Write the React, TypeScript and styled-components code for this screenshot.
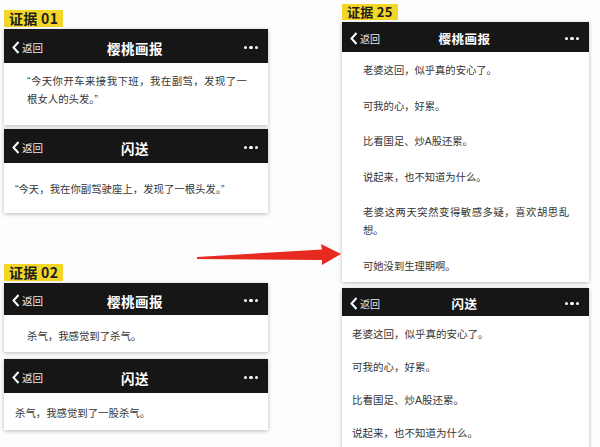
import React from "react";
import styled, { createGlobalStyle } from "styled-components";

const Global = createGlobalStyle`
  html, body { margin: 0; padding: 0; background: #fdfdfd; }
  body { font-family: "Noto Sans CJK SC", "Noto Sans", sans-serif; }
`;

const Page = styled.div`
  position: relative;
  width: 600px;
  height: 447px;
  overflow: hidden;
  background: #fdfdfd;
  display: grid;
  grid-template-columns: 264px 247px;
  column-gap: 74px;
  padding-left: 4px;
  box-sizing: border-box;
`;

const Column = styled.div<{ $top: number }>`
  display: flex;
  flex-direction: column;
  align-items: flex-start;
  padding-top: ${(p) => p.$top}px;
`;

const Label = styled.div<{ $size: number; $mt?: number }>`
  background: #f3d628;
  color: #1d1d1d;
  font-weight: 700;
  font-size: ${(p) => p.$size}px;
  line-height: ${(p) => p.$size + 3}px;
  padding: 0 5px;
  margin-top: ${(p) => p.$mt ?? 0}px;
  margin-bottom: 2px;
  letter-spacing: 0.3px;
`;

const Card = styled.div<{ $mt?: number }>`
  align-self: stretch;
  margin-top: ${(p) => p.$mt ?? 0}px;
  background: #fff;
  box-shadow: 0 1px 4px rgba(0, 0, 0, 0.28);
`;

const Header = styled.div<{ $h: number; $title: number }>`
  height: ${(p) => p.$h}px;
  background: #171617;
  display: grid;
  grid-template-columns: 1fr auto 1fr;
  align-items: center;
  padding: 3px 10px 0 8px;
  box-sizing: border-box;
  color: #fff;
  font-size: ${(p) => p.$title}px;
`;

const Back = styled.div<{ $size: number }>`
  display: flex;
  align-items: center;
  gap: 2px;
  color: #e8e8e8;
  font-size: ${(p) => p.$size}px;
`;

const Title = styled.div`
  font-weight: 700;
  letter-spacing: 0.5px;
`;

const Dots = styled.div`
  justify-self: end;
  display: flex;
  gap: 2px;
`;

const Dot = styled.span`
  width: 3.5px;
  height: 3.5px;
  border-radius: 50%;
  background: #fff;
`;

const Body = styled.div<{ $pad: string; $size: number; $gap: number; $h?: number }>`
  padding: ${(p) => p.$pad};
  font-family: "Liberation Sans", "Noto Sans CJK SC", sans-serif;
  font-size: ${(p) => p.$size}px;
  line-height: 18px;
  color: #353535;
  text-align: justify;
  display: flex;
  flex-direction: column;
  gap: ${(p) => p.$gap}px;
  ${(p) => (p.$h ? `height: ${p.$h}px; box-sizing: border-box;` : "")}
`;

const Para = styled.p`
  margin: 0;
`;

const Arrow = styled.svg`
  position: absolute;
  left: 190px;
  top: 238px;
`;

const Chevron = () => (
  <svg width="8" height="13" viewBox="0 0 8 13">
    <polyline points="6.5,1 1.5,6.5 6.5,12" fill="none" stroke="#fff" strokeWidth="2" />
  </svg>
);

type PhoneProps = {
  title: string;
  h: number;
  titleSize: number;
  backSize: number;
  mt?: number;
  pad: string;
  size: number;
  gap?: number;
  bodyH?: number;
  lines: string[];
};

const Phone = ({ title, h, titleSize, backSize, mt, pad, size, gap = 0, bodyH, lines }: PhoneProps) => (
  <Card $mt={mt}>
    <Header $h={h} $title={titleSize}>
      <Back $size={backSize}>
        <Chevron />
        <span>返回</span>
      </Back>
      <Title>{title}</Title>
      <Dots>
        <Dot />
        <Dot />
        <Dot />
      </Dots>
    </Header>
    <Body $pad={pad} $size={size} $gap={gap} $h={bodyH}>
      {lines.map((l, i) => (
        <Para key={i}>{l}</Para>
      ))}
    </Body>
  </Card>
);

export default function App() {
  return (
    <>
      <Global />
      <Page>
        <Column $top={10}>
          <Label $size={14}>证据 01</Label>
          <Phone
            title="樱桃画报"
            h={34}
            titleSize={13.5}
            backSize={10.5}
            pad="10px 21px 0 23px"
            size={10.4}
            bodyH={62}
            lines={["“今天你开车来接我下班，我在副驾，发现了一根女人的头发。”"]}
          />
          <Phone
            title="闪送"
            h={34}
            titleSize={13.5}
            backSize={10.5}
            mt={4}
            pad="18px 10px 0 11px"
            size={10.4}
            bodyH={50}
            lines={["“今天，我在你副驾驶座上，发现了一根头发。”"]}
          />
          <Label $size={14} $mt={51}>证据 02</Label>
          <Phone
            title="樱桃画报"
            h={32}
            titleSize={13.5}
            backSize={10.5}
            pad="13px 10px 0 23px"
            size={10.4}
            bodyH={37}
            lines={["杀气，我感觉到了杀气。"]}
          />
          <Phone
            title="闪送"
            h={34}
            titleSize={13.5}
            backSize={10.5}
            mt={7}
            pad="12px 10px 0 11px"
            size={10.4}
            bodyH={37}
            lines={["杀气，我感觉到了一股杀气。"]}
          />
        </Column>
        <Column $top={4}>
          <Label $size={13}>证据 25</Label>
          <Phone
            title="樱桃画报"
            h={30}
            titleSize={12.5}
            backSize={10}
            pad="10px 20px 0 21px"
            size={10.3}
            gap={17.5}
            bodyH={230}
            lines={[
              "老婆这回，似乎真的安心了。",
              "可我的心，好累。",
              "比看国足、炒A股还累。",
              "说起来，也不知道为什么。",
              "老婆这两天突然变得敏感多疑，喜欢胡思乱想。",
              "可她没到生理期啊。",
            ]}
          />
          <Phone
            title="闪送"
            h={28}
            titleSize={12.5}
            backSize={10}
            mt={6}
            pad="9px 10px 0 10px"
            size={10.5}
            gap={15}
            bodyH={140}
            lines={[
              "老婆这回，似乎真的安心了。",
              "可我的心，好累。",
              "比看国足、炒A股还累。",
              "说起来，也不知道为什么。",
            ]}
          />
        </Column>
        <Arrow width="160" height="32" viewBox="190 238 160 32">
          <polygon
            points="197,257 322,249.5 321,244 341,254 322,265 322,260 197,259"
            fill="#e62a1f"
          />
        </Arrow>
      </Page>
    </>
  );
}
